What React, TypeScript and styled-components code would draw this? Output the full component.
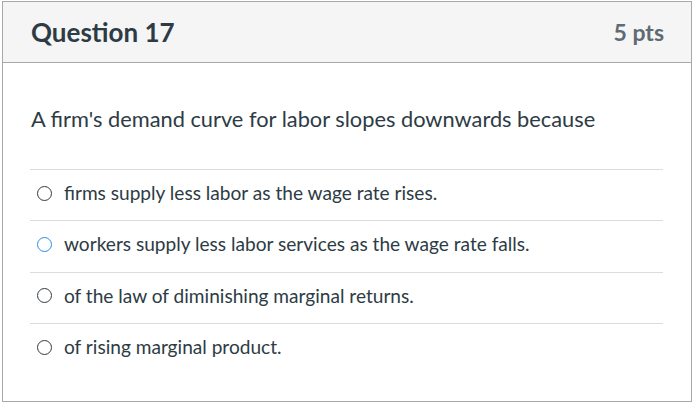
import React from "react";
import styled, { createGlobalStyle } from "styled-components";

const GlobalStyle = createGlobalStyle`
  html, body {
    margin: 0;
    padding: 0;
    background: #ffffff;
  }
  body {
    font-family: Lato, "Helvetica Neue", Arial, sans-serif;
    color: #2d3b45;
  }
`;

interface Answer {
  text: string;
  focused?: boolean;
}

const answers: Answer[] = [
  { text: "firms supply less labor as the wage rate rises." },
  { text: "workers supply less labor services as the wage rate falls.", focused: true },
  { text: "of the law of diminishing marginal returns." },
  { text: "of rising marginal product." },
];

const App = () => {
  return (
    <>
      <GlobalStyle />
      <Page>
        <QuestionBox>
          <Header>
            <Title>Question 17</Title>
            <Points>5 pts</Points>
          </Header>
          <Body>
            <Prompt>A firm's demand curve for labor slopes downwards because</Prompt>
            <AnswerList>
              {answers.map((a, i) => (
                <AnswerRow key={i}>
                  <Radio $focused={a.focused} />
                  <AnswerText>{a.text}</AnswerText>
                </AnswerRow>
              ))}
            </AnswerList>
          </Body>
        </QuestionBox>
      </Page>
    </>
  );
};

const Page = styled.div`
  padding: 1px 0 0 2px;
`;

const QuestionBox = styled.div`
  width: 690px;
  height: 401px;
  box-sizing: border-box;
  border: 1px solid #a8a8a8;
  display: flex;
  flex-direction: column;
`;

const Header = styled.div`
  display: flex;
  align-items: center;
  justify-content: space-between;
  height: 61px;
  padding: 0 27px 1px 28px;
  box-sizing: border-box;
  background: #f5f5f5;
  border-bottom: 1px solid #a8a8a8;
`;

const Title = styled.div`
  font-size: 26px;
  font-weight: 700;
  color: #2d3b45;
`;

const Points = styled.div`
  font-size: 23px;
  font-weight: 700;
  color: #5f6a72;
`;

const Body = styled.div`
  padding: 0 28px 0 27px;
`;

const Prompt = styled.div`
  font-size: 21.8px;
  line-height: 28px;
  padding: 42px 0 0 1px;
  height: 64px;
  box-sizing: border-box;
  color: #2d3b45;
`;

const AnswerList = styled.div`
  display: flex;
  flex-direction: column;
  margin-top: 42px;
`;

const AnswerRow = styled.div`
  display: flex;
  align-items: center;
  height: 51.3px;
  padding: 0 0 5px 7px;
  box-sizing: border-box;
  border-top: 1px solid #dcdcdc;
  gap: 12px;
`;

const Radio = styled.span<{ $focused?: boolean }>`
  width: 15px;
  height: 15px;
  border-radius: 50%;
  border: 1.3px solid ${(p) => (p.$focused ? "#2a8ce8" : "#333b40")};
  box-sizing: border-box;
  flex-shrink: 0;
  margin-top: 1px;
`;

const AnswerText = styled.div`
  font-size: 19.1px;
  color: #2d3b45;
`;

export default App;
